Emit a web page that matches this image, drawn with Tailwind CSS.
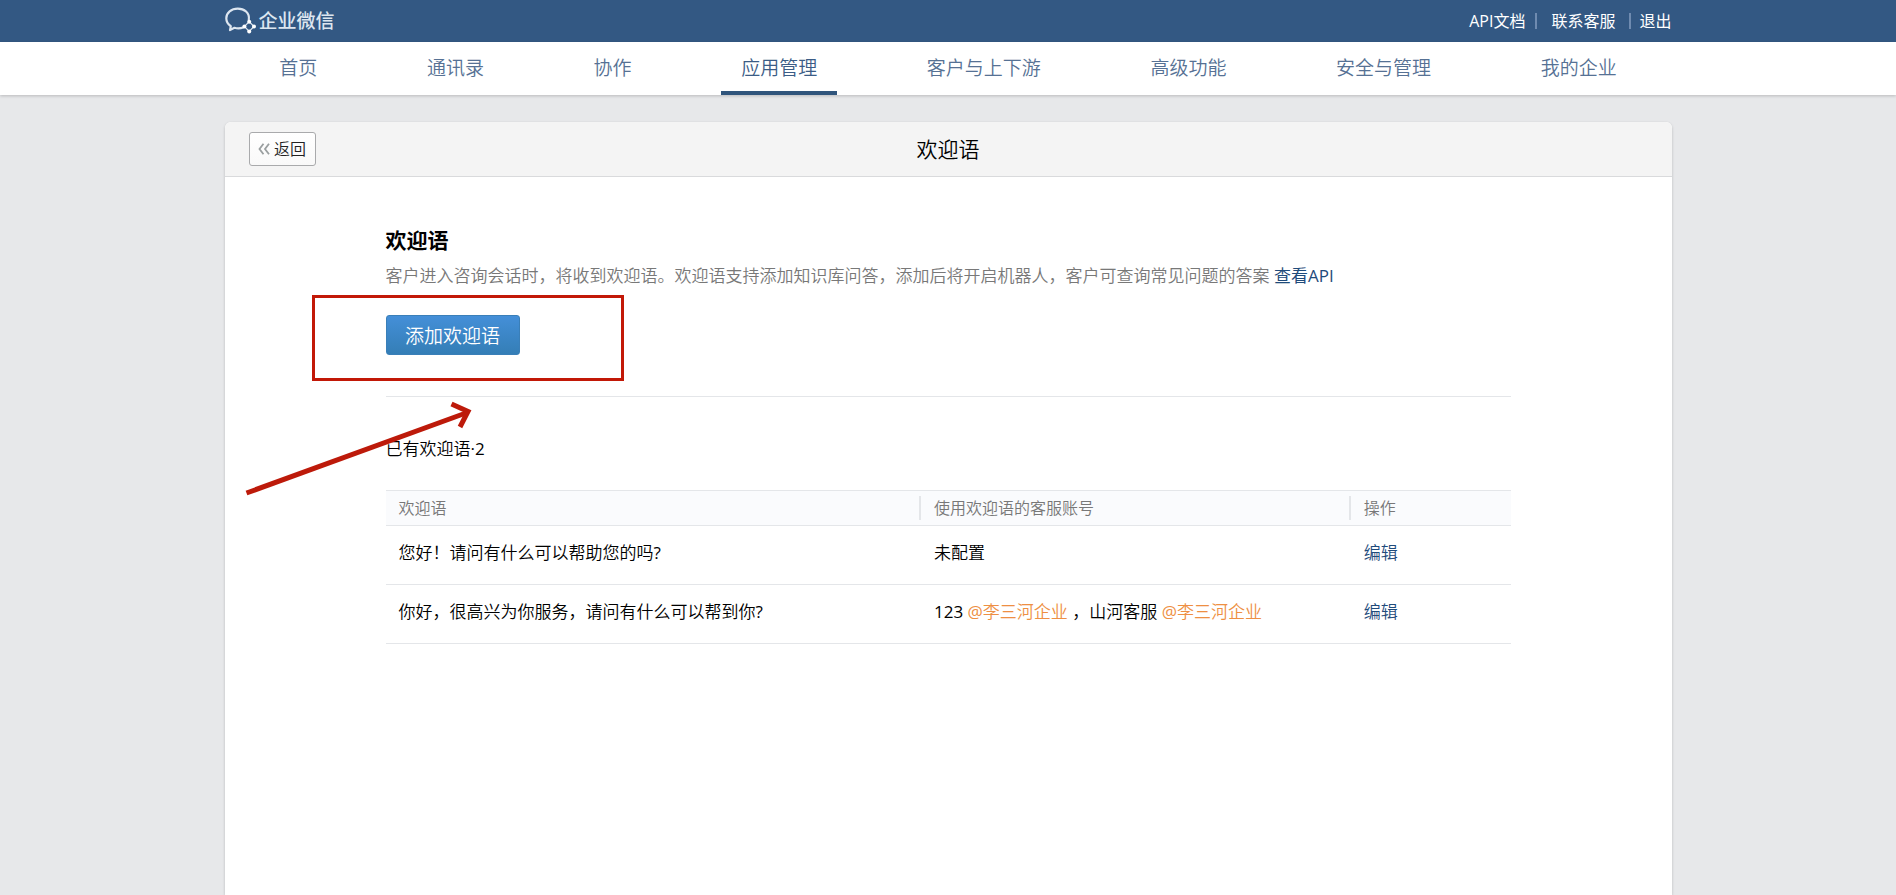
<!DOCTYPE html>
<html lang="zh-CN">
<head>
<meta charset="utf-8">
<meta name="viewport" content="width=device-width, initial-scale=1">
<title>欢迎语 - 企业微信</title>
<script src="https://cdn.jsdelivr.net/npm/@tailwindcss/browser@4"></script>
</head>
<body class="flex min-h-screen flex-col bg-[#e7e8ea] font-['Open_Sans','Noto_Sans_CJK_SC',sans-serif] text-[17px] leading-6 font-[350] text-black">

  <header class="bg-[#335883] text-white">
    <div class="mx-auto flex h-[42px] max-w-[1447px] items-center justify-between">
      <a href="#" class="flex items-center gap-0.5 text-[19px] font-medium text-[#dde6f0]">
        <svg class="h-8 w-8" viewBox="0 0 32 32" fill="none" aria-hidden="true">
          <path d="M23.8 15C25 7.600 19 3.600 12.800 3.600 6.300 3.600 1.300 7.700 1.300 13.300c0 3.400 1.700 6.100 4.500 7.900l-.8 3.900 4.400-2.300c2.800.8 5.900.8 8.900-.3" stroke="#dde6f0" stroke-width="2.200" stroke-linecap="round" stroke-linejoin="round"/>
          <path d="M24.200 16.700l4.800 4.800-4.800 4.800-4.800-4.800z" stroke="#dde6f0" stroke-width="1.200"/>
          <g fill="#fff">
            <circle cx="24.200" cy="16.800" r="2"/>
            <circle cx="29" cy="21.500" r="2"/>
            <circle cx="24.200" cy="26.500" r="2"/>
            <circle cx="19.400" cy="21.500" r="2"/>
          </g>
        </svg>
        <span>企业微信</span>
      </a>
      <div class="flex items-center text-[16px] font-normal">
        <a href="#">API文档</a>
        <span class="mr-3.5 ml-2.5 h-4 w-0.5 bg-[#6f8bb0]"></span>
        <a href="#">联系客服</a>
        <span class="mr-2 ml-3.5 h-4 w-0.5 bg-[#6f8bb0]"></span>
        <a href="#">退出</a>
      </div>
    </div>
  </header>

  <nav class="bg-white shadow-[0_1px_3px_rgba(0,0,0,0.2)]">
    <div class="mx-auto flex h-[53px] max-w-[1447px] items-stretch justify-around text-[19px] text-[#567194]">
      <a href="#" class="flex items-center border-b-4 border-transparent px-5 pt-0.5">首页</a>
      <a href="#" class="flex items-center border-b-4 border-transparent px-5 pt-0.5">通讯录</a>
      <a href="#" class="flex items-center border-b-4 border-transparent px-5 pt-0.5">协作</a>
      <a href="#" aria-current="page" class="flex items-center border-b-4 border-[#30557c] px-5 pt-0.5 text-[#3b5c86]">应用管理</a>
      <a href="#" class="flex items-center border-b-4 border-transparent px-5 pt-0.5">客户与上下游</a>
      <a href="#" class="flex items-center border-b-4 border-transparent px-5 pt-0.5">高级功能</a>
      <a href="#" class="flex items-center border-b-4 border-transparent px-5 pt-0.5">安全与管理</a>
      <a href="#" class="flex items-center border-b-4 border-transparent px-5 pt-0.5">我的企业</a>
    </div>
  </nav>

  <main class="relative mx-auto mt-[27px] w-full max-w-[1447px] flex-1 rounded-t-md bg-white shadow-[0_1px_3px_rgba(0,0,0,0.2)]">
    <div class="grid h-[55px] grid-cols-[1fr_auto_1fr] items-center rounded-t-md border-b border-[#d9dadc] bg-[#f4f4f4] px-6">
      <button type="button" class="flex h-[34px] w-[67px] items-center justify-center gap-1 rounded-[3px] border border-[#a9aaac] bg-linear-to-b from-white to-[#f9f9f9] text-[16px] text-[#222]">
        <svg class="h-3 w-3" viewBox="0 0 12 12" fill="none" stroke="#9a9fa0" stroke-width="1.800" aria-hidden="true">
          <path d="M5.500.8L1.500 6l4 5.200M11 .8L7 6l4 5.200"/>
        </svg>
        <span>返回</span>
      </button>
      <h1 class="text-[21px]">欢迎语</h1>
    </div>

    <div class="px-[161px] pt-[51px]">
      <section class="border-b border-[#e4e6e9] pb-[41px]">
        <h2 class="text-[21px] font-bold">欢迎语</h2>
        <p class="mt-3 text-[#787878]">客户进入咨询会话时，将收到欢迎语。欢迎语支持添加知识库问答，添加后将开启机器人，客户可查询常见问题的答案 <a href="#" class="font-normal text-[#1f4b7b]">查看API</a></p>
        <button type="button" class="mt-[27px] flex h-10 w-[134px] items-center justify-center rounded-[3px] border border-[#3a7fb8] bg-linear-to-b from-[#448fd8] to-[#347eb6] pt-0.5 text-[19px] text-white">添加欢迎语</button>
      </section>

      <h3 class="mt-10">已有欢迎语<span class="font-normal">·2</span></h3>

      <table class="mt-[29px] w-full table-fixed border-collapse text-left">
        <colgroup>
          <col class="w-[47.6%]">
          <col class="w-[38.2%]">
          <col>
        </colgroup>
        <thead>
          <tr class="h-[35px] border-y border-[#e4e6e9] bg-[#fafbfd] text-[16px] text-[#787878]">
            <th scope="col" class="p-0 font-[350]"><div class="border-r-2 border-[#e4e6e9] px-[13px]">欢迎语</div></th>
            <th scope="col" class="p-0 font-[350]"><div class="border-r-2 border-[#e4e6e9] px-[13px]">使用欢迎语的客服账号</div></th>
            <th scope="col" class="p-0 font-[350]"><div class="px-[13px]">操作</div></th>
          </tr>
        </thead>
        <tbody>
          <tr class="h-[59px] border-b border-[#e4e6e9]">
            <td class="px-[13px] pb-1">您好！请问有什么可以帮助您的吗<span class="font-normal">?</span></td>
            <td class="px-[13px] pb-1">未配置</td>
            <td class="px-[13px] pb-1"><a href="#" class="text-[#1f4b7b]">编辑</a></td>
          </tr>
          <tr class="h-[59px] border-b border-[#e4e6e9]">
            <td class="px-[13px] pb-1">你好，很高兴为你服务，请问有什么可以帮到你<span class="font-normal">?</span></td>
            <td class="px-[13px] pb-1"><span class="font-normal">123</span> <span class="text-[#ee8f43]"><span class="font-normal">@</span>李三河企业</span> ，山河客服 <span class="text-[#ee8f43]"><span class="font-normal">@</span>李三河企业</span></td>
            <td class="px-[13px] pb-1"><a href="#" class="text-[#1f4b7b]">编辑</a></td>
          </tr>
        </tbody>
      </table>
    </div>

    <!-- Callout: frame and arrow over the add button -->
    <div class="pointer-events-none absolute top-[173px] left-[87px] h-[86px] w-[312px] border-3 border-[#c21807]"></div>
    <svg class="pointer-events-none absolute top-[278px] left-[19px] h-[98px] w-[230px]" viewBox="0 0 230 98" fill="none" stroke="#bd1a0a" stroke-width="5" aria-hidden="true">
      <path d="M2.500 93L222 13"/>
      <path d="M207.500 4L224 11.500 216 27"/>
    </svg>
  </main>
</body>
</html>
